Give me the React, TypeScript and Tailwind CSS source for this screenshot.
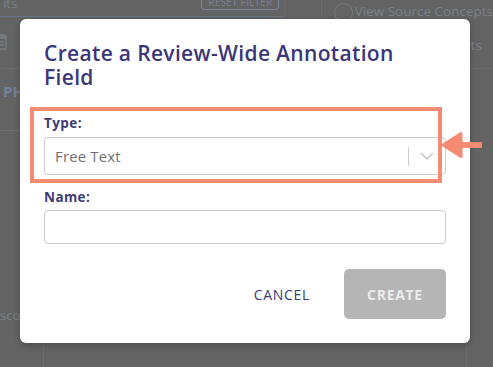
import React from 'react'

/** Dimmed page that sits behind the modal: only its edges show. */
function BackdropPage() {
  return (
    <div className="flex h-full w-full flex-col text-[#7c8089]">
      <div className="flex h-[17px]">
        <div className="flex w-[290px] items-end justify-between border-b border-[#6b7587] pl-[3px] pr-[5px]">
          <span className="mb-[5px] text-[13px] leading-[16px]">its</span>
          <span className="mb-[6px] w-[78px] rounded-[3px] border border-[#78829a] text-center text-[10px] leading-[14px] tracking-wide text-[#7a8294]">
            RESET FILTER
          </span>
        </div>
        <div className="w-[37px] border-l border-[#6a6a6a]" />
        <div className="flex flex-1 items-start gap-[2px] border-l border-[#6c6c6c] pl-[12px] pt-[3px]">
          <span className="h-[19px] w-[19px] shrink-0 rounded-full border border-[#7a7a7a]" />
          <span className="whitespace-nowrap text-[13.5px] leading-[16px]">View Source Concepts</span>
        </div>
      </div>
      <div className="flex h-[52px] border-b border-[#6e6e6e]">
        <div className="flex w-[20px] items-start pt-[17px]">
          <svg width="8" height="16" viewBox="0 0 8 16" fill="none" stroke="#7a7f88" strokeWidth="1.3">
            <rect x="-4" y="2" width="10" height="13" rx="1" />
            <path d="M-1 1h5v3h-5z" />
            <path d="M0 8h4M0 11h4" />
          </svg>
        </div>
        <div className="flex-1" />
        <div className="flex w-[53px] items-start overflow-hidden pt-[20px]">
          <span className="whitespace-nowrap text-[13.5px] leading-[16px]">ncepts</span>
        </div>
      </div>
      <div className="flex h-[62px] w-[20px] border-b border-[#6e6e6e] pl-[3px] pt-[13px]">
        <span className="text-[15px] font-bold leading-[18px] text-[#71819a]">PH</span>
      </div>
      <div className="flex h-[200px] w-[20px] items-end pb-[8px]">
        <span className="whitespace-nowrap text-[13px] leading-[16px]">scop</span>
      </div>
      <div className="flex flex-1">
        <div className="w-[44px] border-r border-[#6c6c6c]" />
        <div className="w-[423px] border-r border-[#6c6c6c]" />
      </div>
    </div>
  )
}

/** Modal: create a review-wide annotation field. */
function CreateFieldModal() {
  return (
    <div className="absolute left-[20px] top-[19px] h-[324px] w-[450px] rounded-[6px] bg-white pl-[24px] pr-[24px] pt-[22px] shadow-[0_2px_6px_rgba(0,0,0,0.25)]">
      <h2 className="text-[21px] font-semibold leading-[24px] tracking-[0.016em] text-[#3a3678]">
        <span className="block">Create a Review-Wide Annotation</span>
        <span className="block">Field</span>
      </h2>

      <label className="mt-[26px] block text-[13.5px] font-bold leading-[16px] tracking-[0.03em] text-[#3e3b74]">Type:</label>
      <div className="mt-[6px] flex h-[38px] items-center rounded-[4px] border border-[#cccccc] bg-white">
        <span className="flex-1 pl-[10px] text-[15px] tracking-[0.01em] text-[#707070]">Free Text</span>
        <span className="h-[19px] w-px bg-[#cccccc]" />
        <span className="flex w-[36px] items-center justify-center">
          <svg width="14" height="9" viewBox="0 0 14 9" fill="none" stroke="#c8c8c8" strokeWidth="1.6" strokeLinecap="round" strokeLinejoin="round">
            <path d="M1.5 1.5l5.5 5.5 5.5-5.5" />
          </svg>
        </span>
      </div>

      <label className="mt-[14px] block text-[13.5px] font-bold leading-[16px] tracking-[0.03em] text-[#3e3b74]">Name:</label>
      <div className="mt-[5px] h-[34px] rounded-[4px] border border-[#cccccc] bg-white" />

      <div className="mt-[25px] flex items-center justify-end gap-[34px]">
        <button className="text-[14px] font-medium tracking-[0.05em] text-[#3d3a78]">CANCEL</button>
        <button className="flex h-[50px] w-[102px] items-center justify-center rounded-[5px] bg-[#b5b5b5] text-[14px] font-bold tracking-[0.05em] text-[#ececec]">
          CREATE
        </button>
      </div>

      {/* highlight annotation over the Type field */}
      <div className="pointer-events-none absolute left-[10px] top-[88px] h-[76px] w-[412px] border-[4px] border-[#f68b74]" />
    </div>
  )
}

export default function App() {
  return (
    <div className="relative h-[367px] w-[493px] overflow-hidden bg-[#636363] font-['Open_Sans','Liberation_Sans',sans-serif]">
      <BackdropPage />
      <CreateFieldModal />
      {/* pointer arrow annotation */}
      <svg className="absolute left-[440px] top-[130px]" width="44" height="30" viewBox="0 0 44 30" fill="#f68b74" stroke="#f68b74" strokeWidth="3" strokeLinejoin="round">
        <path d="M3 15L21 3.5V26.5Z" />
        <rect x="21" y="13" width="20" height="4" strokeWidth="2" />
      </svg>
    </div>
  )
}
